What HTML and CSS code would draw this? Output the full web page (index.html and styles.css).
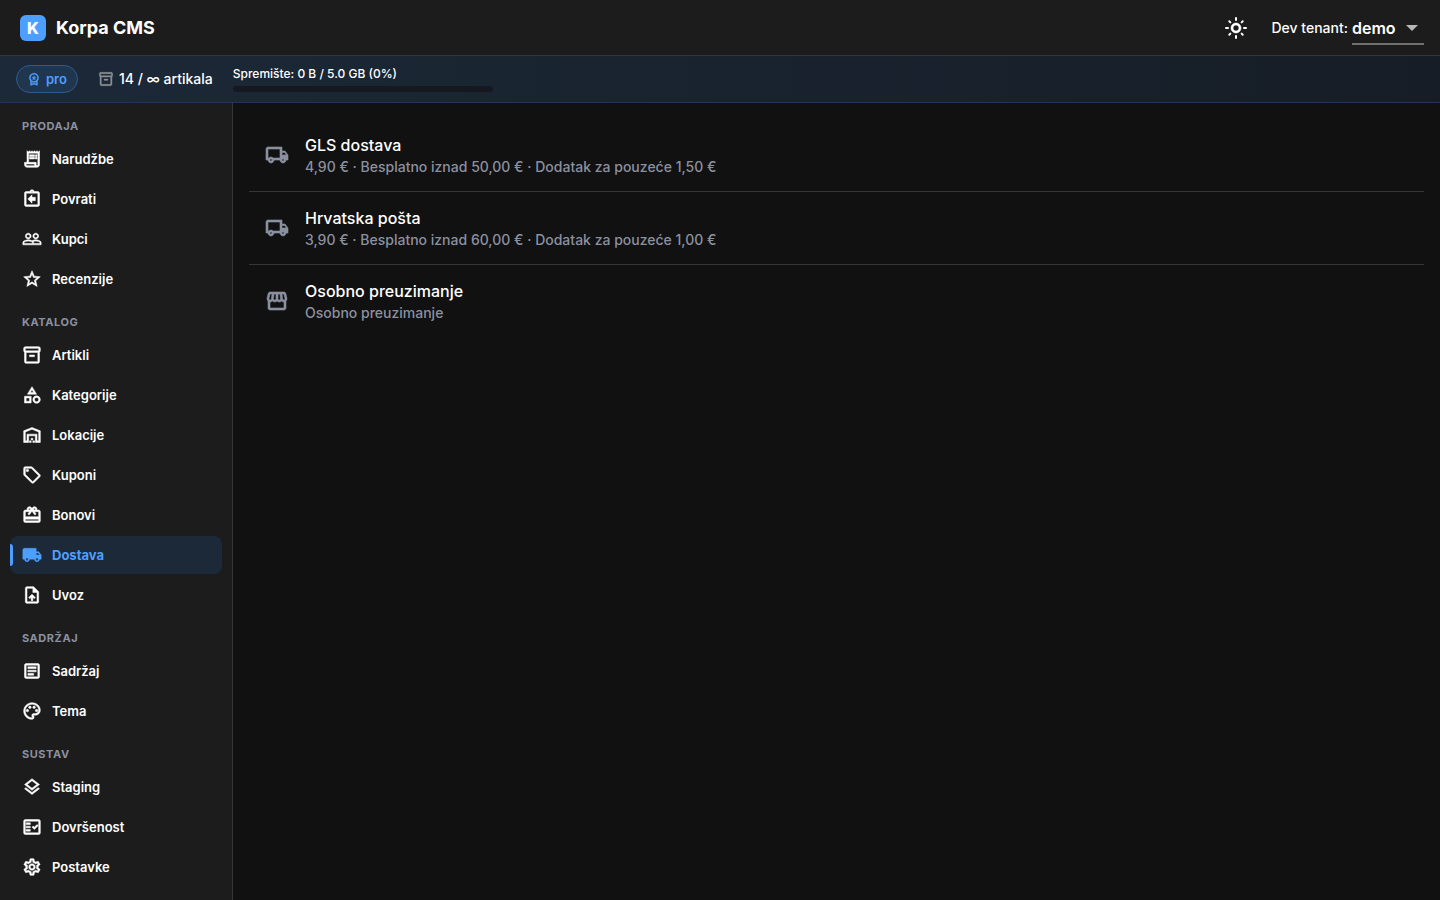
FILE: index.html
```html
<!DOCTYPE html>
<html lang="hr">
<head>
  <meta charset="UTF-8">
  <meta name="viewport" content="width=device-width, initial-scale=1.0">
  <title>Korpa CMS</title>
  <link rel="stylesheet" href="styles.css">
</head>
<body>
  <header class="topbar">
    <a class="brand" href="#">
      <span class="brand-mark">K</span>
      <span class="brand-name">Korpa CMS</span>
    </a>
    <div class="topbar-actions">
      <button class="theme-toggle" type="button" aria-label="Tema">
        <svg class="icon icon-lg" viewBox="0 0 24 24"><path d="M12 9c1.65 0 3 1.35 3 3s-1.35 3-3 3-3-1.35-3-3 1.35-3 3-3m0-2c-2.76 0-5 2.24-5 5s2.24 5 5 5 5-2.24 5-5-2.24-5-5-5z"/><path class="rays" d="M2 12h2M20 12h2M12 2v2M12 20v2M5.29 5.29l1.06 1.06M17.65 17.65l1.06 1.06M5.29 18.71l1.06-1.06M17.65 6.35l1.06-1.06"/></svg>
      </button>
      <div class="tenant">
        <label for="tenant">Dev tenant:</label>
        <div class="tenant-field">
          <select id="tenant">
            <option>demo</option>
          </select>
          <svg class="tenant-arrow" viewBox="0 0 24 24"><path d="M6 10l6 6 6-6z"/></svg>
        </div>
      </div>
    </div>
  </header>

  <div class="planbar">
    <span class="plan-badge">
      <svg class="icon icon-xs" viewBox="0 0 24 24"><path d="M9.68 13.69L12 11.93l2.31 1.76-.88-2.85L15.75 9h-2.84L12 6.19 11.09 9H8.25l2.31 1.84-.88 2.85zM20 10c0-4.42-3.58-8-8-8s-8 3.58-8 8c0 2.03.76 3.87 2 5.28V23l6-2 6 2v-7.72c1.24-1.41 2-3.25 2-5.28zm-8-6c3.31 0 6 2.69 6 6s-2.69 6-6 6-6-2.69-6-6 2.69-6 6-6zm0 15l-4 1.02v-3.1c1.18.68 2.54 1.08 4 1.08s2.82-.4 4-1.08v3.1L12 19z"/></svg>
      pro
    </span>
    <span class="plan-items">
      <svg class="icon icon-sm" viewBox="0 0 24 24"><path d="M20 2H4c-1 0-2 .9-2 2v3.01c0 .72.43 1.34 1 1.69V20c0 1.1 1.1 2 2 2h14c.9 0 2-.9 2-2V8.7c.57-.35 1-.97 1-1.69V4c0-1.1-1-2-2-2zm-1 18H5V9h14v11zm1-13H4V4h16v3z"/><path d="M9 12h6v2H9z"/></svg>
      14 / ∞ artikala
    </span>
    <div class="storage">
      <span id="storage-label">Spremište: 0 B / 5.0 GB (0%)</span>
      <div class="storage-track" role="progressbar" aria-labelledby="storage-label" aria-valuenow="0"></div>
    </div>
  </div>

  <div class="layout">
    <nav class="sidebar">
      <h2 class="nav-title">Prodaja</h2>
      <ul class="nav-list">
        <li><a class="nav-link" href="#"><svg class="icon" viewBox="0 0 24 24"><path d="M19.5 3.5L18 2l-1.5 1.5L15 2l-1.5 1.5L12 2l-1.5 1.5L9 2 7.5 3.5 6 2v14H3v3c0 1.66 1.34 3 3 3h12c1.66 0 3-1.34 3-3V2l-1.5 1.5zM15 20H6c-.55 0-1-.45-1-1v-1h10v2zm4-1c0 .55-.45 1-1 1s-1-.45-1-1v-3H8V5h11v14z"/><path d="M9 7h6v2H9zM16 7h2v2h-2zM9 10h6v2H9zM16 10h2v2h-2z"/></svg>Narudžbe</a></li>
        <li><a class="nav-link" href="#"><svg class="icon" viewBox="0 0 24 24"><path d="M16 10h-4V7l-5 5 5 5v-3h4z"/><path d="M19 3h-4.18C14.4 1.84 13.3 1 12 1s-2.4.84-2.82 2H5c-1.1 0-2 .9-2 2v14c0 1.1.9 2 2 2h14c1.1 0 2-.9 2-2V5c0-1.1-.9-2-2-2zm-7-.25c.41 0 .75.34.75.75s-.34.75-.75.75-.75-.34-.75-.75.34-.75.75-.75zM19 19H5V5h14v14z"/></svg>Povrati</a></li>
        <li><a class="nav-link" href="#"><svg class="icon" viewBox="0 0 24 24"><path d="M16.5 13c-1.2 0-3.07.34-4.5 1-1.43-.67-3.3-1-4.5-1C5.33 13 1 14.08 1 16.25V19h22v-2.75c0-2.17-4.33-3.25-6.5-3.25zm-4 4.5h-10v-1.25c0-.54 2.56-1.75 5-1.75s5 1.21 5 1.75v1.25zm9 0H14v-1.25c0-.46-.2-.86-.52-1.22.88-.3 1.96-.53 3.02-.53 2.44 0 5 1.21 5 1.75v1.25zM7.5 12c1.93 0 3.5-1.57 3.5-3.5S9.43 5 7.5 5 4 6.57 4 8.5 5.57 12 7.5 12zm0-5.5c1.1 0 2 .9 2 2s-.9 2-2 2-2-.9-2-2 .9-2 2-2zm9 5.5c1.93 0 3.5-1.57 3.5-3.5S18.43 5 16.5 5 13 6.57 13 8.5s1.57 3.5 3.5 3.5zm0-5.5c1.1 0 2 .9 2 2s-.9 2-2 2-2-.9-2-2 .9-2 2-2z"/></svg>Kupci</a></li>
        <li><a class="nav-link" href="#"><svg class="icon" viewBox="0 0 24 24"><path d="M22 9.24l-7.19-.62L12 2 9.19 8.63 2 9.24l5.46 4.73L5.82 21 12 17.27 18.18 21l-1.63-7.03L22 9.24zM12 15.4l-3.76 2.27 1-4.28-3.32-2.88 4.38-.38L12 6.1l1.71 4.04 4.38.38-3.32 2.88 1 4.28L12 15.4z"/></svg>Recenzije</a></li>
      </ul>

      <h2 class="nav-title">Katalog</h2>
      <ul class="nav-list">
        <li><a class="nav-link" href="#"><svg class="icon" viewBox="0 0 24 24"><path d="M20 2H4c-1 0-2 .9-2 2v3.01c0 .72.43 1.34 1 1.69V20c0 1.1 1.1 2 2 2h14c.9 0 2-.9 2-2V8.7c.57-.35 1-.97 1-1.69V4c0-1.1-1-2-2-2zm-1 18H5V9h14v11zm1-13H4V4h16v3z"/><path d="M9 12h6v2H9z"/></svg>Artikli</a></li>
        <li><a class="nav-link" href="#"><svg class="icon" viewBox="0 0 24 24"><path d="M12 2l-5.5 9h11L12 2zm0 3.84L13.93 9h-3.87L12 5.84zM17.5 13c-2.49 0-4.5 2.01-4.5 4.5s2.01 4.5 4.5 4.5 4.5-2.01 4.5-4.5-2.01-4.5-4.5-4.5zm0 7c-1.38 0-2.5-1.12-2.5-2.5s1.12-2.5 2.5-2.5 2.5 1.12 2.5 2.5-1.12 2.5-2.5 2.5zM3 21.5h8v-8H3v8zm2-6h4v4H5v-4z"/></svg>Kategorije</a></li>
        <li><a class="nav-link" href="#"><svg class="icon" viewBox="0 0 24 24"><path d="M20 8.35V19h-2v-8H6v8H4V8.35l8-3.2 8 3.2zM22 21V7L12 3 2 7v14h6v-8h8v8h6z"/><path d="M11 19H9v2h2v-2zm2-3h-2v2h2v-2zm2 3h-2v2h2v-2z"/></svg>Lokacije</a></li>
        <li><a class="nav-link" href="#"><svg class="icon" viewBox="0 0 24 24"><path d="M21.41 11.41l-8.83-8.83c-.37-.37-.88-.58-1.41-.58H4c-1.1 0-2 .9-2 2v7.17c0 .53.21 1.04.59 1.41l8.83 8.83c.78.78 2.05.78 2.83 0l7.17-7.17c.78-.78.78-2.04-.01-2.83zM12.83 20L4 11.17V4h7.17L20 12.83 12.83 20z"/><circle cx="6.5" cy="6.5" r="1.5"/></svg>Kuponi</a></li>
        <li><a class="nav-link" href="#"><svg class="icon" viewBox="0 0 24 24"><path d="M20 6h-2.18c.11-.31.18-.65.18-1 0-1.66-1.34-3-3-3-1.05 0-1.96.54-2.5 1.35l-.5.67-.5-.68C10.96 2.54 10.05 2 9 2 7.34 2 6 3.34 6 5c0 .35.07.69.18 1H4c-1.11 0-1.99.89-1.99 2L2 19c0 1.11.89 2 2 2h16c1.11 0 2-.89 2-2V8c0-1.11-.89-2-2-2zm-5-2c.55 0 1 .45 1 1s-.45 1-1 1-1-.45-1-1 .45-1 1-1zM9 4c.55 0 1 .45 1 1s-.45 1-1 1-1-.45-1-1 .45-1 1-1zm11 15H4v-2h16v2zm0-5H4V8h5.08L7 10.83 8.62 12 12 7.4l3.38 4.6L17 10.83 14.92 8H20v6z"/></svg>Bonovi</a></li>
        <li><a class="nav-link active" href="#" aria-current="page"><svg class="icon" viewBox="0 0 24 24"><path d="M20 8h-3V4H3c-1.1 0-2 .9-2 2v11h2c0 1.66 1.34 3 3 3s3-1.34 3-3h6c0 1.66 1.34 3 3 3s3-1.34 3-3h2v-5l-3-4zM6 18.5c-.83 0-1.5-.67-1.5-1.5s.67-1.5 1.5-1.5 1.5.67 1.5 1.5-.67 1.5-1.5 1.5zm13.5-9l1.96 2.5H17V9.5h2.5zm-1.5 9c-.83 0-1.5-.67-1.5-1.5s.67-1.5 1.5-1.5 1.5.67 1.5 1.5-.67 1.5-1.5 1.5z"/></svg>Dostava</a></li>
        <li><a class="nav-link" href="#"><svg class="icon" viewBox="0 0 24 24"><path d="M14 2H6c-1.1 0-1.99.9-1.99 2L4 20c0 1.1.89 2 1.99 2H18c1.1 0 2-.9 2-2V8l-6-6zm4 18H6V4h7v5h5v11zM8 15.01l1.41 1.41L11 14.84V19h2v-4.16l1.59 1.59L16 15.01 12.01 11z"/></svg>Uvoz</a></li>
      </ul>

      <h2 class="nav-title">Sadržaj</h2>
      <ul class="nav-list">
        <li><a class="nav-link" href="#"><svg class="icon" viewBox="0 0 24 24"><path d="M19 5v14H5V5h14m0-2H5c-1.1 0-2 .9-2 2v14c0 1.1.9 2 2 2h14c1.1 0 2-.9 2-2V5c0-1.1-.9-2-2-2z"/><path d="M14 17H7v-2h7v2zm3-4H7v-2h10v2zm0-4H7V7h10v2z"/></svg>Sadržaj</a></li>
        <li><a class="nav-link" href="#"><svg class="icon" viewBox="0 0 24 24"><path d="M12 22C6.49 22 2 17.51 2 12S6.49 2 12 2s10 4.04 10 9c0 3.31-2.69 6-6 6h-1.77c-.28 0-.5.22-.5.5 0 .12.05.23.13.33.41.47.64 1.06.64 1.67 0 1.38-1.12 2.5-2.5 2.5zm0-18c-4.41 0-8 3.59-8 8s3.59 8 8 8c.28 0 .5-.22.5-.5 0-.16-.08-.28-.14-.35-.41-.46-.63-1.05-.63-1.65 0-1.38 1.12-2.5 2.5-2.5H16c2.21 0 4-1.79 4-4 0-3.86-3.59-7-8-7z"/><circle cx="6.5" cy="11.5" r="1.5"/><circle cx="9.5" cy="7.5" r="1.5"/><circle cx="14.5" cy="7.5" r="1.5"/><circle cx="17.5" cy="11.5" r="1.5"/></svg>Tema</a></li>
      </ul>

      <h2 class="nav-title">Sustav</h2>
      <ul class="nav-list">
        <li><a class="nav-link" href="#"><svg class="icon" viewBox="0 0 24 24"><path d="M11.99 18.54l-7.37-5.73L3 14.07l9 7 9-7-1.63-1.27zM12 16l7.36-5.73L21 9l-9-7-9 7 1.63 1.27L12 16zm0-11.47L17.74 9 12 13.47 6.26 9 12 4.53z"/></svg>Staging</a></li>
        <li><a class="nav-link" href="#"><svg class="icon" viewBox="0 0 24 24"><path d="M20 3H4c-1.1 0-2 .9-2 2v14c0 1.1.9 2 2 2h16c1.1 0 2-.9 2-2V5c0-1.1-.9-2-2-2zm0 16H4V5h16v14z"/><path d="M19.41 10.42L17.99 9l-3.17 3.17-1.41-1.42L12 12.16 14.82 15zM5 7h5v2H5zM5 11h5v2H5zM5 15h5v2H5z"/></svg>Dovršenost</a></li>
        <li><a class="nav-link" href="#"><svg class="icon" viewBox="0 0 24 24"><path d="M19.43 12.98c.04-.32.07-.64.07-.98 0-.34-.03-.66-.07-.98l2.11-1.65c.19-.15.24-.42.12-.64l-2-3.46c-.09-.16-.26-.25-.44-.25-.06 0-.12.01-.17.03l-2.49 1c-.52-.4-1.08-.73-1.69-.98l-.38-2.65C14.46 2.18 14.25 2 14 2h-4c-.25 0-.46.18-.49.42l-.38 2.65c-.61.25-1.17.59-1.69.98l-2.49-1c-.06-.02-.12-.03-.18-.03-.17 0-.34.09-.43.25l-2 3.46c-.13.22-.07.49.12.64l2.11 1.65c-.04.32-.07.65-.07.98 0 .33.03.66.07.98l-2.11 1.65c-.19.15-.24.42-.12.64l2 3.46c.09.16.26.25.44.25.06 0 .12-.01.17-.03l2.49-1c.52.4 1.08.73 1.69.98l.38 2.65c.03.24.24.42.49.42h4c.25 0 .46-.18.49-.42l.38-2.65c.61-.25 1.17-.59 1.69-.98l2.49 1c.06.02.12.03.18.03.17 0 .34-.09.43-.25l2-3.46c.12-.22.07-.49-.12-.64l-2.11-1.65zm-1.98-1.71c.04.31.05.52.05.73 0 .21-.02.43-.05.73l-.14 1.13.89.7 1.08.84-.7 1.21-1.27-.51-1.04-.42-.9.68c-.43.32-.84.56-1.25.73l-1.06.43-.16 1.13-.2 1.35h-1.4l-.19-1.35-.16-1.13-1.06-.43c-.43-.18-.83-.41-1.23-.71l-.91-.7-1.06.43-1.27.51-.7-1.21 1.08-.84.89-.7-.14-1.13c-.03-.31-.05-.54-.05-.74s.02-.43.05-.73l.14-1.13-.89-.7-1.08-.84.7-1.21 1.27.51 1.04.42.9-.68c.43-.32.84-.56 1.25-.73l1.06-.43.16-1.13.2-1.35h1.39l.19 1.35.16 1.13 1.06.43c.43.18.83.41 1.23.71l.91.7 1.06-.43 1.27-.51.7 1.21-1.07.85-.89.7.14 1.13zM12 8c-2.21 0-4 1.79-4 4s1.79 4 4 4 4-1.79 4-4-1.79-4-4-4zm0 6c-1.1 0-2-.9-2-2s.9-2 2-2 2 .9 2 2-.9 2-2 2z"/></svg>Postavke</a></li>
      </ul>
    </nav>

    <main class="content">
      <ul class="methods">
        <li class="method">
          <svg class="icon icon-lg" viewBox="0 0 24 24"><path d="M20 8h-3V4H3c-1.1 0-2 .9-2 2v11h2c0 1.66 1.34 3 3 3s3-1.34 3-3h6c0 1.66 1.34 3 3 3s3-1.34 3-3h2v-5l-3-4zm-.5 1.5l1.96 2.5H17V9.5h2.5zM6 18c-.55 0-1-.45-1-1s.45-1 1-1 1 .45 1 1-.45 1-1 1zm2.22-3c-.55-.61-1.33-1-2.22-1s-1.67.39-2.22 1H3V6h12v9H8.22zM18 18c-.55 0-1-.45-1-1s.45-1 1-1 1 .45 1 1-.45 1-1 1z"/></svg>
          <div>
            <h3 class="method-name">GLS dostava</h3>
            <p class="method-info">4,90 € · Besplatno iznad 50,00 € · Dodatak za pouzeće 1,50 €</p>
          </div>
        </li>
        <li class="method">
          <svg class="icon icon-lg" viewBox="0 0 24 24"><path d="M20 8h-3V4H3c-1.1 0-2 .9-2 2v11h2c0 1.66 1.34 3 3 3s3-1.34 3-3h6c0 1.66 1.34 3 3 3s3-1.34 3-3h2v-5l-3-4zm-.5 1.5l1.96 2.5H17V9.5h2.5zM6 18c-.55 0-1-.45-1-1s.45-1 1-1 1 .45 1 1-.45 1-1 1zm2.22-3c-.55-.61-1.33-1-2.22-1s-1.67.39-2.22 1H3V6h12v9H8.22zM18 18c-.55 0-1-.45-1-1s.45-1 1-1 1 .45 1 1-.45 1-1 1z"/></svg>
          <div>
            <h3 class="method-name">Hrvatska pošta</h3>
            <p class="method-info">3,90 € · Besplatno iznad 60,00 € · Dodatak za pouzeće 1,00 €</p>
          </div>
        </li>
        <li class="method">
          <svg class="icon icon-lg" viewBox="0 0 24 24"><path d="M21.9 8.89l-1.05-4.37c-.22-.9-1-1.52-1.91-1.52H5.05c-.9 0-1.69.63-1.9 1.52L2.1 8.89c-.24 1.02-.02 2.06.62 2.88.08.11.19.19.28.29V19c0 1.1.9 2 2 2h14c1.1 0 2-.9 2-2v-6.94c.09-.09.2-.18.28-.28.64-.82.87-1.87.62-2.89zm-2.99-3.9l1.05 4.37c.1.42.01.84-.25 1.17-.14.18-.44.47-.94.47-.61 0-1.14-.49-1.21-1.14L16.98 5l1.93-.01zM13 5h1.96l.54 4.52c.05.39-.07.78-.33 1.07-.22.26-.54.41-.95.41-.67 0-1.22-.59-1.22-1.31V5zM8.49 9.52L9.04 5H11v4.69c0 .72-.55 1.31-1.29 1.31-.34 0-.65-.15-.89-.41-.25-.29-.37-.68-.33-1.07zm-4.45-.16L5.05 5h1.97l-.58 4.86c-.08.65-.6 1.14-1.21 1.14-.49 0-.8-.29-.93-.47-.27-.32-.36-.75-.26-1.17zM5 19v-6.03c.08.01.15.03.23.03.87 0 1.66-.36 2.24-.95.6.6 1.4.95 2.31.95.87 0 1.65-.36 2.23-.93.59.57 1.39.93 2.29.93.84 0 1.64-.35 2.24-.95.58.59 1.37.95 2.24.95.08 0 .15-.02.23-.03V19H5z"/></svg>
          <div>
            <h3 class="method-name">Osobno preuzimanje</h3>
            <p class="method-info">Osobno preuzimanje</p>
          </div>
        </li>
      </ul>
    </main>
  </div>
</body>
</html>
```

FILE: styles.css
```css
:root {
  --bg: #111111;
  --surface: #1c1c1c;
  --border: #363636;
  --text: #ffffff;
  --muted: #8b90a0;
  --accent: #4d9fff;
}

* {
  box-sizing: border-box;
}

body {
  margin: 0;
  min-height: 100vh;
  display: flex;
  flex-direction: column;
  font-family: Inter, sans-serif;
  font-size: 14px;
  line-height: 20px;
  background: var(--bg);
  color: var(--text);
}

h2, h3, p, ul {
  margin: 0;
  padding: 0;
}

ul {
  list-style: none;
}

a {
  color: inherit;
  text-decoration: none;
}

.icon {
  width: 20px;
  height: 20px;
  flex-shrink: 0;
  fill: currentColor;
  stroke: currentColor;
  stroke-width: 0.6;
}

.icon-xs {
  width: 14px;
  height: 14px;
}

.icon-sm {
  width: 16px;
  height: 16px;
}

.icon-lg {
  width: 24px;
  height: 24px;
}

/* top bar */
.topbar {
  height: 56px;
  padding: 0 16px 0 20px;
  display: flex;
  align-items: center;
  justify-content: space-between;
  background: var(--surface);
  border-bottom: 1px solid var(--border);
}

.brand {
  display: flex;
  align-items: center;
  gap: 10px;
}

.brand-mark {
  width: 26px;
  height: 26px;
  border-radius: 6px;
  background: var(--accent);
  font-size: 16px;
  font-weight: 800;
  line-height: 26px;
  text-align: center;
}

.brand-name {
  font-size: 18px;
  font-weight: 700;
}

.topbar-actions,
.tenant {
  display: flex;
  align-items: center;
}

.topbar-actions {
  gap: 16px;
}

.tenant {
  gap: 4px;
  font-weight: 500;
}

.theme-toggle {
  display: flex;
  padding: 8px;
  border: 0;
  background: none;
  color: inherit;
  cursor: pointer;
}

.rays {
  fill: none;
  stroke-width: 2;
  stroke-linecap: round;
}

.tenant-field {
  position: relative;
}

.tenant-field select {
  width: 72px;
  height: 34px;
  padding: 2px 24px 0 0;
  appearance: none;
  border: 0;
  border-bottom: 2px solid #707070;
  border-radius: 0;
  background: transparent;
  color: inherit;
  font: 600 16px Inter, sans-serif;
}

.tenant-arrow {
  position: absolute;
  top: 4px;
  right: 0;
  width: 24px;
  height: 24px;
  fill: #b8b8b8;
  pointer-events: none;
}

/* plan bar */
.planbar {
  height: 47px;
  padding: 0 16px;
  display: flex;
  align-items: center;
  gap: 20px;
  background: linear-gradient(90deg, #1c2938, #161d26);
  border-bottom: 1px solid #1f3654;
}

.plan-badge,
.plan-items {
  display: flex;
  align-items: center;
  gap: 5px;
  font-weight: 500;
}

.plan-items .icon {
  color: #8c8f94;
}

.plan-badge {
  height: 28px;
  padding: 0 10px;
  border: 1px solid #2f5a8e;
  border-radius: 14px;
  background: #20364f;
  color: var(--accent);
  font-size: 13px;
  font-weight: 600;
}

.storage {
  width: 260px;
  font-size: 12px;
  font-weight: 500;
  line-height: 16px;
}

.storage-track {
  height: 6px;
  margin-top: 4px;
  border-radius: 3px;
  background: #15191f;
}

/* layout */
.layout {
  flex: 1;
  display: flex;
}

/* sidebar */
.sidebar {
  width: 233px;
  flex-shrink: 0;
  padding: 15px 10px 12px;
  background: var(--surface);
  border-right: 1px solid var(--border);
}

.nav-title {
  padding: 0 12px 6px;
  color: var(--muted);
  font-size: 11px;
  font-weight: 700;
  line-height: 16px;
  letter-spacing: 0.05em;
  text-transform: uppercase;
}

.nav-list {
  display: flex;
  flex-direction: column;
  gap: 2px;
  margin-bottom: 16px;
}

.nav-list:last-child {
  margin-bottom: 0;
}

.nav-link {
  position: relative;
  display: flex;
  align-items: center;
  gap: 10px;
  height: 38px;
  padding: 0 12px;
  border-radius: 8px;
  font-size: 13px;
  font-weight: 600;
}

.nav-link.active {
  background: #1c2938;
  color: var(--accent);
  font-weight: 700;
}

.nav-link.active::before {
  content: "";
  position: absolute;
  left: 0;
  top: 8px;
  bottom: 8px;
  width: 3px;
  border-radius: 0 3px 3px 0;
  background: var(--accent);
}

/* delivery methods */
.content {
  flex: 1;
  padding: 16px;
}

.method {
  display: flex;
  align-items: center;
  gap: 16px;
  padding: 14px 16px;
  border-bottom: 1px solid var(--border);
}

.method:last-child {
  border-bottom: 0;
}

.method .icon {
  color: var(--muted);
}

.method-name {
  font-size: 16px;
  font-weight: 500;
  line-height: 24px;
}

.method-info {
  color: var(--muted);
  font-weight: 500;
}
```
